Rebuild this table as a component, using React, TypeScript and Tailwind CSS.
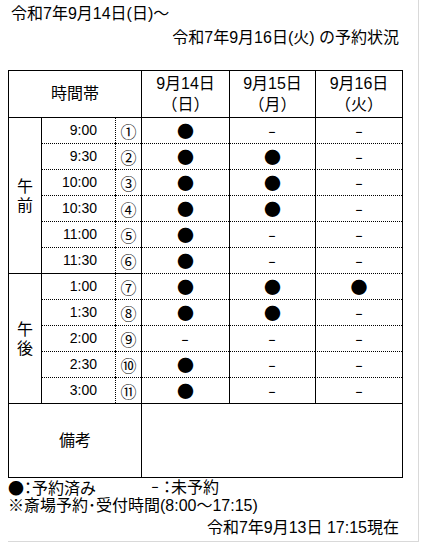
import React from "react";

type Mark = "o" | "-";
type Row = { t: string; n: string; m: Mark[] };

const am: Row[] = [
  { t: "9:00", n: "①", m: ["o", "-", "-"] },
  { t: "9:30", n: "②", m: ["o", "o", "-"] },
  { t: "10:00", n: "③", m: ["o", "o", "-"] },
  { t: "10:30", n: "④", m: ["o", "o", "-"] },
  { t: "11:00", n: "⑤", m: ["o", "-", "-"] },
  { t: "11:30", n: "⑥", m: ["o", "-", "-"] },
];
const pm: Row[] = [
  { t: "1:00", n: "⑦", m: ["o", "o", "o"] },
  { t: "1:30", n: "⑧", m: ["o", "o", "-"] },
  { t: "2:00", n: "⑨", m: ["-", "-", "-"] },
  { t: "2:30", n: "⑩", m: ["o", "-", "-"] },
  { t: "3:00", n: "⑪", m: ["o", "-", "-"] },
];

function MarkCell({ mark, dottedTop }: { mark: Mark; dottedTop: boolean }) {
  return (
    <div
      className={
        "flex items-center justify-center border-l border-t border-black " +
        (dottedTop ? "[border-top-style:dotted]" : "")
      }
    >
      {mark === "o" ? (
        <span className="text-[17px] leading-none font-['Noto_Sans_CJK_JP',sans-serif]">●</span>
      ) : (
        <span className="inline-block scale-x-50 text-[16px] leading-none font-['Noto_Sans_CJK_JP',sans-serif]">－</span>
      )}
    </div>
  );
}

function Rows({ rows, firstSolidDays }: { rows: Row[]; firstSolidDays: boolean }) {
  return (
    <>
      {rows.map((r, i) => {
        const first = i === 0;
        return (
          <React.Fragment key={r.t}>
            <div
              className={
                "flex items-center justify-end pr-[18px] border-l border-t border-black font-['Liberation_Sans',sans-serif] text-[14px] " +
                (first ? "" : "[border-top-style:dotted]")
              }
            >
              {r.t}
            </div>
            <div
              className={
                "flex items-center justify-center border-l border-t border-black [border-left-style:dotted] text-[16px] leading-none font-['Noto_Sans_CJK_JP',sans-serif] " +
                (first ? "" : "[border-top-style:dotted]")
              }
            >
              {r.n}
            </div>
            {r.m.map((m, j) => (
              <MarkCell key={j} mark={m} dottedTop={!(first && firstSolidDays)} />
            ))}
          </React.Fragment>
        );
      })}
    </>
  );
}

export default function App() {
  return (
    <div className="bg-white text-black font-['Liberation_Sans','Noto_Sans_CJK_JP',sans-serif] text-[16px]">
      <div className="ml-2 w-[411px] h-[542px] border-r border-b border-[#d9d9d9] pt-[2px]">
        <div className="h-[24px] leading-[24px] pl-[3px]">令和7年9月14日(日)～</div>
        <div className="w-[395px] h-[24px] leading-[24px] text-right pr-[4px]">令和7年9月16日(火) の予約状況</div>
        <div className="mt-[20px] w-[395px] grid grid-cols-[33px_74px_26px_88px_86px_87px] grid-rows-[47px_repeat(11,26px)_74px] border-r border-b border-black">
          <div className="col-span-3 flex items-center justify-center border-l border-t border-black">時間帯</div>
          {[
            ["9月14日", "（日）"],
            ["9月15日", "（月）"],
            ["9月16日", "（火）"],
          ].map(([a, b]) => (
            <div key={a} className="flex flex-col items-center justify-center border-l border-t border-black leading-[21px]">
              <span>{a}</span>
              <span>{b}</span>
            </div>
          ))}
          <div className="row-span-6 flex flex-col items-center justify-center border-l border-t border-black leading-[19px]">
            <span>午</span>
            <span>前</span>
          </div>
          <Rows rows={am} firstSolidDays={true} />
          <div className="row-span-5 flex flex-col items-center justify-center border-l border-t border-black leading-[19px]">
            <span>午</span>
            <span>後</span>
          </div>
          <Rows rows={pm} firstSolidDays={false} />
          <div className="col-span-3 flex items-center justify-center border-l border-t border-black">備考</div>
          <div className="col-span-3 border-l border-t border-black"></div>
        </div>
        <div className="flex h-[19px] items-center leading-[19px] [font-feature-settings:'palt']">
          <span className="w-[139px]">
            <span className="font-['Noto_Sans_CJK_JP',sans-serif]">●</span>：予約済み
          </span>
          <span>
            <span className="inline-block scale-x-50">－</span>：未予約
          </span>
        </div>
        <div className="h-[18px] leading-[18px]">※斎場予約･受付時間(8:00〜17:15)</div>
        <div className="w-[395px] h-[22px] leading-[22px] mt-[2px] text-right pr-[4px]">
          令和7年9月13日 17:15現在
        </div>
      </div>
    </div>
  );
}
